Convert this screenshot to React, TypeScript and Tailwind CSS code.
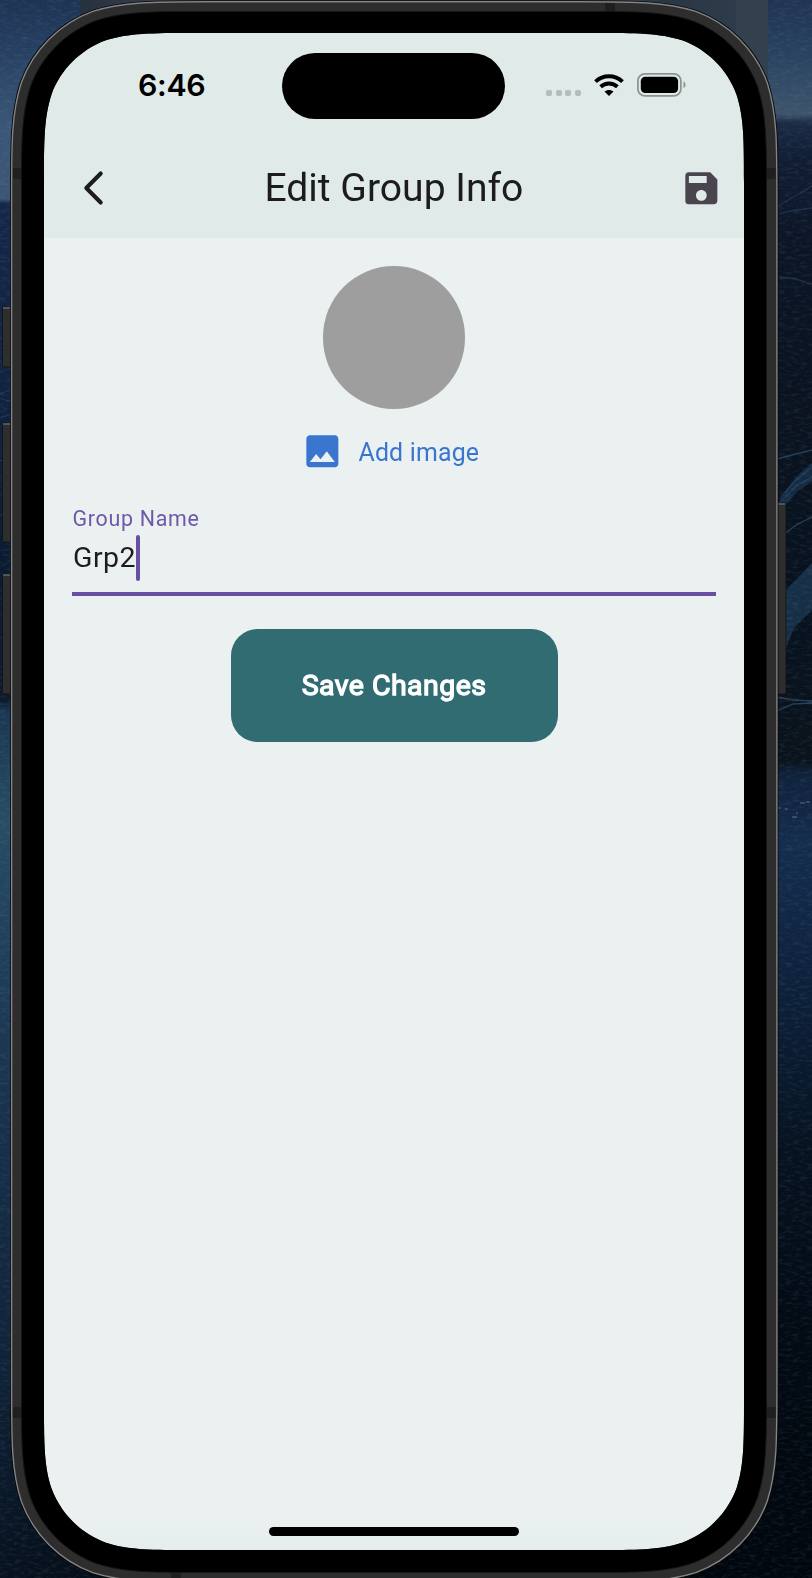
import type { ReactNode } from "react";
import { MdImage, MdSave } from "react-icons/md";

/** Rounded rectangle with the continuous corner curve used by phone hardware. */
function squircle(x0: number, y0: number, x1: number, y1: number, r: number): string {
  const a = 1.52866498 * r;
  const b = 1.08849296 * r;
  const c = 0.86840694 * r;
  const d = 0.63149379 * r;
  const e = 0.07491139 * r;
  const f = 0.37282383 * r;
  const g = 0.16905956 * r;
  return [
    `M${x0 + a} ${y0}H${x1 - a}`,
    `C${x1 - b} ${y0} ${x1 - c} ${y0} ${x1 - d} ${y0 + e}`,
    `C${x1 - f} ${y0 + g} ${x1 - g} ${y0 + f} ${x1 - e} ${y0 + d}`,
    `C${x1} ${y0 + c} ${x1} ${y0 + b} ${x1} ${y0 + a}`,
    `V${y1 - a}`,
    `C${x1} ${y1 - b} ${x1} ${y1 - c} ${x1 - e} ${y1 - d}`,
    `C${x1 - g} ${y1 - f} ${x1 - f} ${y1 - g} ${x1 - d} ${y1 - e}`,
    `C${x1 - c} ${y1} ${x1 - b} ${y1} ${x1 - a} ${y1}`,
    `H${x0 + a}`,
    `C${x0 + b} ${y1} ${x0 + c} ${y1} ${x0 + d} ${y1 - e}`,
    `C${x0 + f} ${y1 - g} ${x0 + g} ${y1 - f} ${x0 + e} ${y1 - d}`,
    `C${x0} ${y1 - c} ${x0} ${y1 - b} ${x0} ${y1 - a}`,
    `V${y0 + a}`,
    `C${x0} ${y0 + b} ${x0} ${y0 + c} ${x0 + e} ${y0 + d}`,
    `C${x0 + g} ${y0 + f} ${x0 + f} ${y0 + g} ${x0 + d} ${y0 + e}`,
    `C${x0 + c} ${y0} ${x0 + b} ${y0} ${x0 + a} ${y0}Z`,
  ].join("");
}

const SCREEN = squircle(44, 33, 744, 1550, 98);
const GLASS = squircle(21.5, 11.5, 766.5, 1572.5, 119);
const BODY = squircle(11, 1.2, 777.5, 1582.8, 129);
const EDGE = squircle(11.6, 1.8, 776.9, 1582.2, 128.5);

/** Desktop wallpaper: a night coast visible around the device. */
function Wallpaper() {
  return (
    <svg className="absolute inset-0" width="812" height="1578" viewBox="0 0 812 1578" aria-hidden="true">
      <defs>
        <linearGradient id="leftSide" x1="0" y1="0" x2="0" y2="1578" gradientUnits="userSpaceOnUse">
          <stop offset="0" stopColor="#1f3354" />
          <stop offset=".03" stopColor="#263f61" />
          <stop offset=".08" stopColor="#3a5778" />
          <stop offset=".126" stopColor="#3c5674" />
          <stop offset=".129" stopColor="#14274a" />
          <stop offset=".24" stopColor="#11233f" />
          <stop offset=".34" stopColor="#0b1c33" />
          <stop offset=".444" stopColor="#0c1a2c" />
          <stop offset=".45" stopColor="#1a3551" />
          <stop offset=".52" stopColor="#274d65" />
          <stop offset=".6" stopColor="#203f5b" />
          <stop offset=".72" stopColor="#172f4a" />
          <stop offset=".85" stopColor="#10243a" />
          <stop offset="1" stopColor="#07121f" />
        </linearGradient>
        <linearGradient id="rightSide" x1="0" y1="0" x2="0" y2="1578" gradientUnits="userSpaceOnUse">
          <stop offset="0" stopColor="#203452" />
          <stop offset=".035" stopColor="#29435f" />
          <stop offset=".072" stopColor="#3e546d" />
          <stop offset=".078" stopColor="#1b2b44" />
          <stop offset=".1" stopColor="#111d33" />
          <stop offset=".155" stopColor="#0b1526" />
          <stop offset=".25" stopColor="#0a131f" />
          <stop offset=".4" stopColor="#08121f" />
          <stop offset=".482" stopColor="#0a131b" />
          <stop offset=".49" stopColor="#10213a" />
          <stop offset=".535" stopColor="#142d4e" />
          <stop offset=".63" stopColor="#0d203a" />
          <stop offset=".73" stopColor="#06121f" />
          <stop offset=".85" stopColor="#020a13" />
          <stop offset="1" stopColor="#02070e" />
        </linearGradient>
        <linearGradient id="topWindow" x1="80" y1="0" x2="768" y2="0" gradientUnits="userSpaceOnUse">
          <stop offset="0" stopColor="#26313e" />
          <stop offset=".2" stopColor="#464a55" />
          <stop offset=".7" stopColor="#4b5059" />
          <stop offset=".85" stopColor="#293644" />
          <stop offset="1" stopColor="#303d4c" />
        </linearGradient>
        <linearGradient id="seaShade" x1="0" y1="0" x2="240" y2="0" gradientUnits="userSpaceOnUse">
          <stop offset="0" stopColor="#02060b" stopOpacity="0" />
          <stop offset=".5" stopColor="#02060b" stopOpacity=".5" />
          <stop offset="1" stopColor="#02060b" stopOpacity=".8" />
        </linearGradient>
        <filter id="grain" x="0" y="0" width="100%" height="100%">
          <feTurbulence type="fractalNoise" baseFrequency=".14 .35" numOctaves="3" seed="7" />
          <feColorMatrix values="0 0 0 0 .35  0 0 0 0 .52  0 0 0 0 .7  1.6 0 0 0 -.72" />
        </filter>
      </defs>
      <rect width="406" height="1578" fill="url(#leftSide)" />
      <rect x="406" width="406" height="1578" fill="url(#rightSide)" />
      <rect y="1400" width="240" height="178" fill="url(#seaShade)" />
      <g fill="none" stroke="#375e80" strokeWidth="1.3" opacity=".6">
        <path d="M778 206 812 186M779 214 790 211 812 208M779 277 796 279 812 284" opacity=".6" />
        <path d="m777 459 19-5 16-4M785 493 794 482 812 467M779 503 796 486 812 477M785 533 798 524 812 517" />
        <path d="m777 697 16 3 19 1M777 711 793 704 812 703" />
        <path d="M0 394 10 390M0 398 11 402M0 418 11 414M0 460 6 462" opacity=".6" />
      </g>
      <path d="M785 591 812 563V610L794 628 785 650Z" fill="#1f4361" opacity=".6" />
      <path d="M779 498 798 475 812 463V481L798 491 785 506Z" fill="#1c3b58" opacity=".6" />
      <path d="M778 808h3m4 1h3m12-6h5m-9 10h2m-6 4h5m9-15h4" stroke="#7d98aa" strokeWidth="1.2" opacity=".65" />
      <rect width="812" height="1578" filter="url(#grain)" opacity=".16" />
      <rect x="80" width="688" height="130" fill="url(#topWindow)" />
      <rect x="736" width="32" height="130" fill="#33414f" />
    </svg>
  );
}

/** Metal frame, black glass border and hardware buttons. The display area is left open. */
function DeviceFrame() {
  return (
    <svg
      className="pointer-events-none absolute inset-0"
      width="812"
      height="1578"
      viewBox="0 0 812 1578"
      fillRule="evenodd"
      aria-hidden="true"
    >
      <g fill="#2e2e2e" stroke="#101216" strokeWidth=".8">
        <rect x="2.5" y="307" width="11" height="60" rx="1.5" />
        <rect x="2.5" y="423" width="11" height="119" rx="1.5" />
        <rect x="2.5" y="574" width="11" height="120" rx="1.5" />
        <rect x="775" y="503" width="11" height="191" rx="1.5" />
      </g>
      <path d="M3 308h7M3 424h7M3 575h7M778 504h7" stroke="#646464" strokeWidth="1.3" />
      <path d={BODY + SCREEN} fill="#2d2d2d" />
      <path d={BODY} fill="none" stroke="#08090b" strokeWidth="2" />
      <path d={EDGE} fill="none" stroke="#858585" strokeWidth="1.4" />
      <path
        d="M13 168h9v11h-9zM766.500 168h9v11h-9zM13 1407h9v11h-9zM766.500 1407h9v11h-9zM605 3h10v9h-10zM171 1572h10v6h-10z"
        fill="#1f1f1f"
      />
      <path d={GLASS + SCREEN} fill="#000" stroke="none" />
      <path d={GLASS} fill="none" stroke="#151515" strokeWidth="1" />
    </svg>
  );
}

function BackIcon() {
  return (
    <svg width="24" height="38" viewBox="0 0 24 38" fill="none" aria-hidden="true">
      <path
        d="M18.700 4.500 4.300 19 18.700 33.500"
        stroke="#1d1b20"
        strokeWidth="4.100"
        strokeLinecap="round"
        strokeLinejoin="round"
      />
    </svg>
  );
}

function WifiIcon() {
  return (
    <svg width="30" height="22" viewBox="0 0 30 22" aria-hidden="true">
      <g fill="none" stroke="#000" strokeWidth="3.900">
        <path d="M1.500 7.700C9.200 .5 20.800 .5 28.500 7.700" />
        <path d="M6.600 12.800C11.400 8.400 18.600 8.400 23.400 12.800" />
      </g>
      <path d="M15 22 10.500 17.600C13 15.300 17 15.300 19.500 17.600Z" />
    </svg>
  );
}

function BatteryIcon() {
  return (
    <svg width="50" height="24" viewBox="0 0 50 24" aria-hidden="true">
      <rect x=".9" y=".9" width="43" height="22" rx="7" fill="none" stroke="#8d9391" strokeWidth="1.700" />
      <rect x="3.800" y="3.800" width="37.300" height="16.200" rx="4.500" />
      <path d="M46.500 8.400C49.300 9.600 49.300 13.900 46.500 15.100Z" fill="#8d9391" />
    </svg>
  );
}

function StatusBar() {
  return (
    <div className="flex h-[103px] items-start">
      <div className="w-[238.300px] pt-[33px] pl-[94px] font-['Inter'] text-[30.300px] leading-[38px] font-semibold tracking-[-0.3px] text-black">
        6:46
      </div>
      <div className="mt-[20px] h-[65.700px] w-[223.200px] rounded-full bg-black" />
      <div className="flex pt-[40px] pl-[40.500px]">
        <div className="mt-[16.500px] flex gap-[3.600px]">
          {[0, 1, 2, 3].map((bar) => (
            <span key={bar} className="size-[6px] rounded-[2px] bg-[#b5bcba]" />
          ))}
        </div>
        <div className="pt-[1px] pl-[13px]">
          <WifiIcon />
        </div>
        <div className="pl-[13px]">
          <BatteryIcon />
        </div>
      </div>
    </div>
  );
}

function TitleBar({ children }: { children: ReactNode }) {
  return (
    <div className="flex h-[101.500px] items-center justify-between pt-[1px] pr-[21px] pl-[37.500px]">
      <button type="button" aria-label="Back" className="mt-[2px] w-[26px]">
        <BackIcon />
      </button>
      <h1 className="pt-[2px] text-[39.100px] leading-[50px] font-normal text-[#1d1b20]">{children}</h1>
      <button type="button" aria-label="Save">
        <MdSave className="mt-[1.500px] size-[42.700px] text-[#49454f]" />
      </button>
    </div>
  );
}

export default function App() {
  return (
    <div className="relative h-[1578px] w-[812px] overflow-hidden bg-[#0b1726] font-['Roboto',sans-serif]">
      <Wallpaper />
      <div className="relative pt-[33px] pl-[44px]">
        <main className="flex h-[1517px] w-[700px] flex-col overflow-hidden rounded-[90px] bg-[#eaf1f0]">
          <header className="h-[204.500px] shrink-0 bg-[#e0eae8]">
            <StatusBar />
            <TitleBar>Edit Group Info</TitleBar>
          </header>

          <section className="flex flex-col items-center pt-[28.500px]">
            <div className="size-[142.600px] rounded-full bg-[#9e9e9e]" />
            <button
              type="button"
              className="mt-[21.500px] mr-[7.500px] flex h-[43px] items-center gap-[14.500px] text-[#3a75d0]"
            >
              <MdImage className="size-[42.700px]" />
              <span className="pt-[2.500px] text-[24.900px] leading-[30px] tracking-[0.18px]">Add image</span>
            </button>
          </section>

          <label className="mx-[28.300px] mt-[32px] flex h-[91px] flex-col border-b-[4px] border-[#6750a4]">
            <span className="h-[30px] pt-px pl-[0.3px] text-[21.400px] leading-[26px] tracking-[0.7px] text-[#6f58a8]">
              Group Name
            </span>
            <span className="flex h-[46px] items-center text-[28.500px] text-[#1d1b20]">
              <span className="pl-[0.7px] leading-[34px] tracking-[0.5px]">Grp2</span>
              <span className="h-[46px] w-[3.600px] rounded-full bg-[#6750a4]" />
            </span>
          </label>

          <button
            type="button"
            className="mt-[33.300px] flex h-[112.500px] w-[327px] items-center justify-center self-center rounded-[26.700px] bg-[#316c72] pt-[2px] text-[28.500px] font-normal tracking-[0.45px] text-white [-webkit-text-stroke:1.3px_white]"
          >
            Save Changes
          </button>

          <div className="mt-auto flex h-[34px] shrink-0 justify-center bg-linear-to-b from-[#eaf1f0] to-[#e6eded] pt-[10.500px]">
            <div className="h-[9.500px] w-[249.500px] rounded-full bg-black" />
          </div>
        </main>
      </div>
      <DeviceFrame />
    </div>
  );
}
